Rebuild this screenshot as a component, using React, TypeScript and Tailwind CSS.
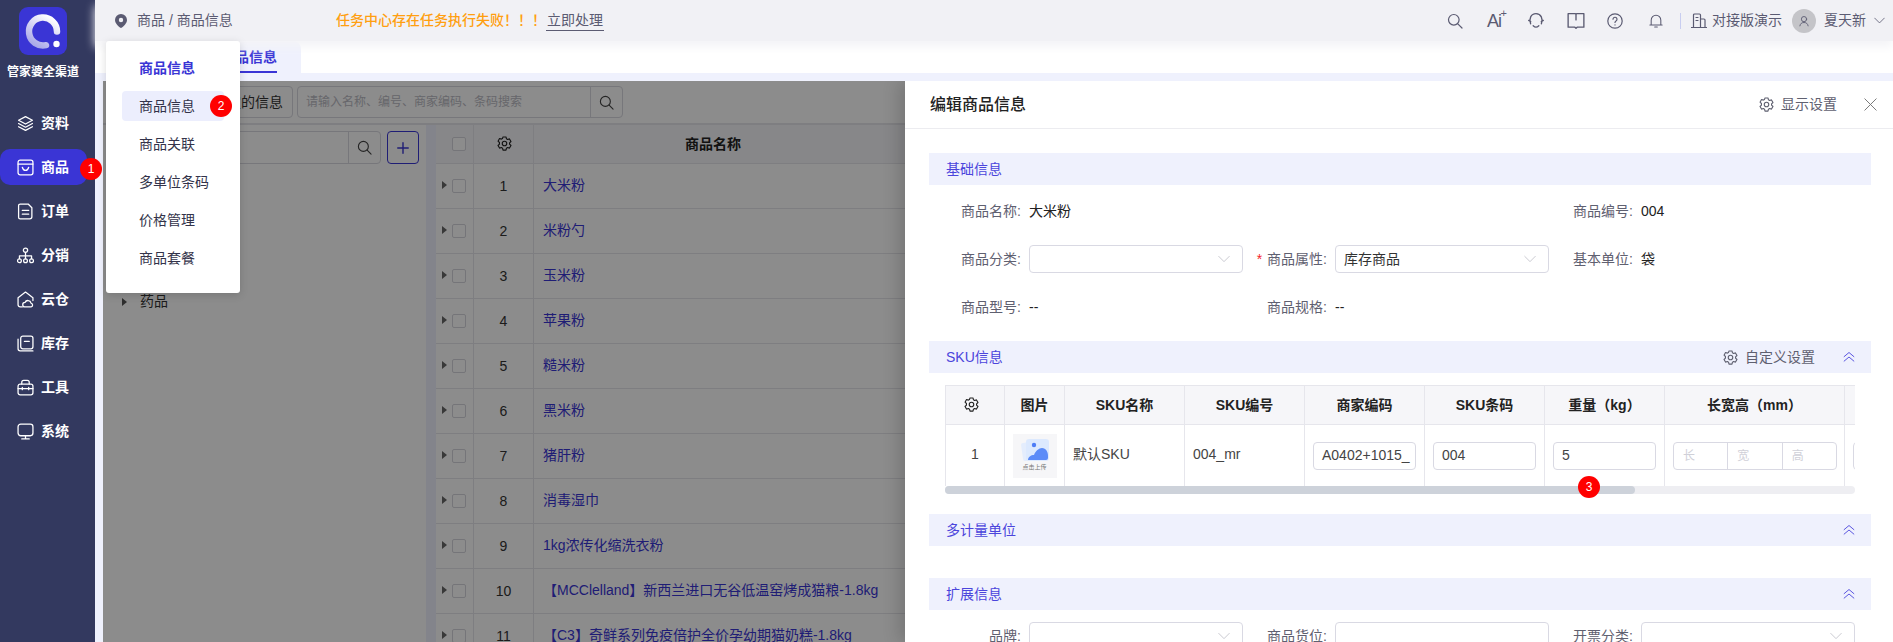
import type { ReactNode } from "react";

const FONT = "font-['Liberation_Sans','Noto_Sans_CJK_SC',sans-serif]";

function Icon({ children, className = "w-4 h-4", box = 16 }: { children: ReactNode; className?: string; box?: number }) {
  return (
    <svg viewBox={`0 0 ${box} ${box}`} fill="none" stroke="currentColor" strokeWidth="1.2" strokeLinecap="round" strokeLinejoin="round" className={className}>
      {children}
    </svg>
  );
}

const GearPath = () => (
  <>
    <path d="M6.400 1h3.200l.5 2 1.200.7 2-.6 1.600 2.800-1.500 1.400v1.400l1.500 1.400-1.600 2.800-2-.6-1.200.7-.5 2H6.400l-.5-2-1.200-.7-2 .6-1.600-2.800 1.500-1.400V6.900L1.100 5.500l1.600-2.800 2 .6 1.200-.7z" />
    <circle cx="8" cy="8" r="2.400" />
  </>
);
const Gear = ({ className = "w-[15px] h-[15px]" }: { className?: string }) => <Icon className={className}><GearPath /></Icon>;

const SearchGlyph = ({ className = "w-[15px] h-[15px]" }: { className?: string }) => (
  <Icon className={className}>
    <circle cx="6.800" cy="6.800" r="5.300" />
    <path d="M10.800 10.800 15 15" />
  </Icon>
);

const navItems: { label: string; active?: boolean; icon: ReactNode }[] = [
  { label: "资料", icon: <><path d="M8 1.500 14.500 5 8 8.500 1.500 5z" /><path d="M1.500 8 8 11.500 14.500 8" /><path d="M1.500 11 8 14.500l6.500-3.500" /></> },
  { label: "商品", active: true, icon: <><rect x="1" y="1" width="14" height="14" rx="2" /><path d="M1 4.800h14" /><path d="M5 7.800c.6 2.200 1.600 3 3 3s2.400-.8 3-3" /></> },
  { label: "订单", icon: <><path d="M3 1h7.500L14 4.500V13a2 2 0 0 1-2 2H3a1.500 1.500 0 0 1-1.500-1.500v-11A1.500 1.500 0 0 1 3 1z" /><path d="M5 7h6M5 10.500h6" /></> },
  { label: "分销", icon: <><circle cx="8" cy="3" r="2" /><circle cx="2.300" cy="13" r="1.800" /><circle cx="8" cy="13" r="1.800" /><circle cx="13.700" cy="13" r="1.800" /><path d="M8 5v6M2.300 11V8.300h11.400V11" /></> },
  { label: "云仓", icon: <><path d="M5 15H3a2 2 0 0 1-2-2V6.300L8 1l7 5.300V9" /><path d="M7.500 15a2.100 2.100 0 0 1 0-4.200 3 3 0 0 1 5.700.5 1.900 1.900 0 0 1 0 3.700z" /></> },
  { label: "库存", icon: <><rect x="3.500" y="1" width="11.500" height="12" rx="2" /><path d="M1 4v9a2 2 0 0 0 2 2h12" /><path d="M7 6h4.500" /></> },
  { label: "工具", icon: <><rect x="1" y="4.800" width="14" height="10.200" rx="2" /><path d="M4.500 4.800V3a1.800 1.800 0 0 1 1.800-1.800h3.400A1.800 1.800 0 0 1 11.500 3v1.800" /><path d="M1 9h14M5 8v2M11 8v2" /></> },
  { label: "系统", icon: <><rect x="1" y="1" width="14" height="11" rx="2.500" /><path d="M8 12v3M4.500 15h7" /></> },
];

function Sidebar() {
  return (
    <aside className="w-[95px] shrink-0 h-full bg-[#33395f] flex flex-col text-white relative">
      <svg viewBox="0 0 48 48" className="w-12 h-12 ml-[19px] mt-[7px]">
        <defs>
          <linearGradient id="ring" x1="0.8" y1="0" x2="0.2" y2="1">
            <stop offset="0" stopColor="#ffffff" />
            <stop offset="1" stopColor="#a9a8e8" />
          </linearGradient>
        </defs>
        <rect width="48" height="48" rx="9" fill="#3a35d5" />
        <path d="M38 24.500A14 14 0 1 0 27 38.200" fill="none" stroke="url(#ring)" strokeWidth="6.500" strokeLinecap="round" />
        <circle cx="37.500" cy="37" r="3.200" fill="#fff" />
      </svg>
      <div className="mt-[9px] pl-[7px] text-[12px] leading-4 font-bold whitespace-nowrap">管家婆全渠道</div>
      <nav className="mt-[21px] flex flex-col">
        {navItems.map((item) => (
          <div key={item.label} className="h-[44px] flex items-center">
            <div className={`h-9 w-[87px] pl-[17px] flex items-center gap-[7px] rounded-[10px] ${item.active ? "bg-[#3a35d5]" : ""}`}>
              <Icon className="w-[17px] h-[17px] shrink-0">{item.icon}</Icon>
              <span className="text-[14px] font-bold leading-5">{item.label}</span>
            </div>
          </div>
        ))}
      </nav>
    </aside>
  );
}

function Header() {
  return (
    <header className="h-[41px] shrink-0 bg-[#f1f1f5] flex items-center text-[#5b5b72] text-[14px] relative z-10 shadow-[0_6px_9px_#f4f4f7]">
      <svg viewBox="0 0 12 14" className="w-3 h-[14px] ml-[20px]">
        <path fillRule="evenodd" d="M6 0a6 6 0 0 1 6 6c0 3.200-3.500 6.800-6 8-2.500-1.200-6-4.800-6-8a6 6 0 0 1 6-6zm0 3.800a2.200 2.200 0 1 0 0 4.400 2.200 2.200 0 0 0 0-4.400z" fill="#5b5b72" />
      </svg>
      <span className="ml-[10px] w-[199px]">商品 / 商品信息</span>
      <span className="text-[#ff9f10] font-medium">任务中心存在任务执行失败！！！</span>
      <span className="border-b border-[#5b5b72] leading-[19px] px-px">立即处理</span>
      <div className="ml-auto flex items-center">
        <SearchGlyph className="w-4 h-4" />
        <div className="ml-[24px] w-[19px] text-[18px] leading-5 relative tracking-[-1px]">Ai<span className="absolute -top-[4px] right-0 text-[11px] leading-3">+</span></div>
        <Icon className="ml-[21px] w-[18px] h-[18px]"><path d="M3.200 10.500C1.500 6 3.500 1.500 8 1.500s6.500 4.500 4.800 9M1.500 7.500l1.800 1M14.500 7.500l-1.800 1M5.500 12.200c1.500 1.500 3.500 1.500 5 0" /></Icon>
        <Icon className="ml-[22px] w-[18px] h-[18px]"><path d="M1 1.500h6.500l.5.500.5-.5H15v12H9l-1 1-1-1H1zM8 2v5" /></Icon>
        <Icon className="ml-[22px] w-4 h-4"><circle cx="8" cy="8" r="7.200" /><path d="M6 6.200a2 2 0 1 1 3 1.800c-.7.400-1 .8-1 1.500M8 11.800v.2" /></Icon>
        <Icon className="ml-[26px] w-[14px] h-4"><path d="M2.500 12V7a5.500 5.500 0 0 1 11 0v5M1 12.500h14M6.500 14.800h3" /></Icon>
        <div className="ml-[17px] w-px h-[16px] bg-[#c8cdf0]" />
        <Icon className="ml-[10px] w-4 h-4"><path d="M2.500 14.500V2a1 1 0 0 1 1-1h5a1 1 0 0 1 1 1v12.500M9.500 6h3.500a1 1 0 0 1 1 1v7.500M.5 14.500h15M5 4.500h2M5 7.500h2" /></Icon>
        <span className="ml-[5px]">对接版演示</span>
        <div className="ml-[10px] w-6 h-6 rounded-full bg-[#c4c4c8] flex items-center justify-center">
          <Icon className="w-3 h-3"><circle cx="8" cy="5.500" r="3.500" /><path d="M2.500 14.500c.5-3 2.500-4.500 5.500-4.500s5 1.500 5.500 4.500" /></Icon>
        </div>
        <span className="ml-2">夏天新</span>
        <Icon className="ml-[8px] mr-[8px] w-[11px] h-[11px]"><path d="M1 4.500 8 11.500l7-7" /></Icon>
      </div>
    </header>
  );
}

const productRows = ["大米粉", "米粉勺", "玉米粉", "苹果粉", "糙米粉", "黑米粉", "猪肝粉", "消毒湿巾", "1kg浓传化缩洗衣粉", "【MCClelland】新西兰进口无谷低温窑烤成猫粮-1.8kg", "【C3】奇鲜系列免疫倍护全价孕幼期猫奶糕-1.8kg"];

const CheckBox = () => <span className="block w-[14px] h-[14px] rounded-[2px] border border-[#d5d5dc] bg-white" />;

function ProductList() {
  return (
    <div className="flex-1 min-w-0 flex flex-col bg-white">
      <div className="h-[44px] shrink-0 border-b-2 border-[#e6e6ec] flex items-center pl-[45px]">
        <div className="h-8 w-[145px] mr-[4px] rounded-[4px] border border-[#d9d9e0] text-[14px] text-[#333] flex items-center justify-end pr-[9px]">选定的信息</div>
        <div className="h-8 w-[326px] rounded-[4px] border border-[#d9d9e0] flex items-center">
          <span className="flex-1 pl-2 text-[12px] text-[#bbbbc4]">请输入名称、编号、商家编码、条码搜索</span>
          <span className="w-8 h-full border-l border-[#d9d9e0] flex items-center justify-center text-[#444]"><SearchGlyph /></span>
        </div>
      </div>
      <div className="flex-1 flex min-h-0">
        <div className="w-[323px] shrink-0 pt-[6px] relative">
          <div className="flex items-start">
            <div className="ml-[10px] w-[268px] h-[33px] rounded-[4px] border border-[#d9d9e0] flex justify-end">
              <span className="w-8 h-full border-l border-[#d9d9e0] flex items-center justify-center text-[#444]"><SearchGlyph /></span>
            </div>
            <div className="ml-[6px] w-8 h-[33px] rounded-[4px] border border-[#3a35d5] text-[#3a35d5] flex items-center justify-center">
              <Icon className="w-[14px] h-[14px]"><path d="M8 2v12M2 8h12" strokeWidth="1.600" /></Icon>
            </div>
          </div>
          <div className="mt-[127px] ml-[19px] flex items-center gap-[13px] text-[14px] text-[#333]">
            <span className="w-0 h-0 border-y-[4px] border-y-transparent border-l-[5px] border-l-[#555]" />
            药品
          </div>
        </div>
        <div className="w-[10px] shrink-0 bg-[#eff1fd]" />
        <div className="flex-1 min-w-0 text-[14px]">
          <div className="h-[39px] flex bg-[#f6f6f9] border-b border-[#e6e6ec]">
            <div className="w-[38px] pl-4 flex items-center border-r border-[#e6e6ec]"><CheckBox /></div>
            <div className="w-[60px] pl-px flex items-center justify-center border-r border-[#e6e6ec] text-[#222] pb-[2px]"><Gear /></div>
            <div className="w-[358px] flex items-center justify-center font-bold text-[#222]">商品名称</div>
          </div>
          {productRows.map((name, i) => (
            <div key={name} className="h-[45px] flex border-b border-[#e6e6ec]">
              <div className="w-[38px] pl-[6px] flex items-center gap-[5px] border-r border-[#e6e6ec]">
                <span className="w-0 h-0 mb-[2px] border-y-[4px] border-y-transparent border-l-[5px] border-l-[#666]" />
                <CheckBox />
              </div>
              <div className="w-[60px] flex items-center justify-center border-r border-[#e6e6ec] text-[#333]">{i + 1}</div>
              <div className="flex-1 pl-[9px] pb-px flex items-center whitespace-nowrap text-[#3a35d5]">{name}</div>
            </div>
          ))}
        </div>
      </div>
    </div>
  );
}

const Chevron = () => (
  <Icon className="w-[12px] h-[12px] text-[#c4c4cc]"><path d="M1 4.500 8 11.500l7-7" /></Icon>
);

function Section({ title, right }: { title: string; right?: ReactNode }) {
  return (
    <div className="h-8 bg-[#eff1fd] pl-[17px] pr-4 flex items-center text-[14px] text-[#4b45dc]">
      <span>{title}</span>
      <div className="ml-auto flex items-center">
        {right}
        {right !== undefined && (
          <Icon className="w-3 h-3 text-[#4b45dc]"><path d="M1.500 7.500 8 2l6.500 5.500M1.500 13.500 8 8l6.500 5.500" /></Icon>
        )}
      </div>
    </div>
  );
}

function Label({ children, required }: { children: string; required?: boolean }) {
  return (
    <div className="pr-2 text-right text-[#5f6070] whitespace-nowrap">
      {required && <span className="text-[#f5222d] mr-[5px]">*</span>}
      {children}:
    </div>
  );
}

function SelectBox({ value, plain }: { value?: string; plain?: boolean }) {
  return (
    <div className="h-7 rounded-[4px] border border-[#d9d9e3] pl-2 pr-[12px] flex items-center text-[#333]">
      <span className="flex-1">{value}</span>
      {!plain && <Chevron />}
    </div>
  );
}

const FIELD_GRID = "grid grid-cols-[100px_214px_92px_214px_92px_214px] items-center text-[14px]";

function TextCell({ value }: { value: string }) {
  return <div className="h-7 rounded-[4px] border border-[#d9d9e3] pl-2 flex items-center overflow-hidden whitespace-nowrap text-[14px] text-[#444]">{value}</div>;
}

const skuHeads: [string, string][] = [
  ["图片", "w-[60px]"],
  ["SKU名称", "w-[120px]"],
  ["SKU编号", "w-[120px]"],
  ["商家编码", "w-[120px]"],
  ["SKU条码", "w-[120px]"],
  ["重量（kg）", "w-[120px]"],
  ["长宽高（mm）", "w-[180px]"],
];

function SkuTable() {
  return (
    <div className="mt-3 ml-4 w-[910px] overflow-hidden">
      <div className="w-[1000px] border-t border-l border-[#e6e6ec]">
        <div className="h-[39px] flex bg-[#f6f6f9] border-b border-[#e6e6ec] text-[14px] font-bold text-[#222]">
          <div className="w-[59px] shrink-0 flex items-center justify-center border-r border-[#e6e6ec] pr-2 pb-[2px]"><Gear /></div>
          {skuHeads.map(([h, w]) => (
            <div key={h} className={`${w} shrink-0 flex items-center justify-center border-r border-[#e6e6ec]`}>{h}</div>
          ))}
        </div>
        <div className="h-[61px] flex text-[14px] text-[#444]">
          <div className="w-[59px] shrink-0 flex items-center justify-center border-r border-[#e6e6ec] pb-[2px]">1</div>
          <div className="w-[60px] shrink-0 flex items-center justify-center border-r border-[#e6e6ec]">
            <div className="w-11 h-11 bg-[#f6f6f8] flex flex-col items-center pt-1">
              <svg viewBox="0 0 28 24" className="w-7 h-6">
                <rect x="1" y="4" width="18" height="18" rx="2" fill="#e4edfd" transform="rotate(-8 10 13)" />
                <rect x="5" y="1" width="23" height="22" rx="3" fill="#dce9fe" />
                <circle cx="13" cy="7" r="2.200" fill="#4d7cf6" />
                <path d="M7 22c0-3 3-5 6-5 1.500-4 5-7 8-7 4 0 6 4 6 8v2a2 2 0 0 1-2 2z" fill="#5b8bf8" />
              </svg>
              <span className="text-[6px] leading-[10px] text-[#777] whitespace-nowrap">点击上传</span>
            </div>
          </div>
          <div className="w-[120px] shrink-0 pl-[8px] pb-[2px] flex items-center border-r border-[#e6e6ec]">默认SKU</div>
          <div className="w-[120px] shrink-0 pl-[8px] pb-[2px] flex items-center border-r border-[#e6e6ec]">004_mr</div>
          <div className="w-[120px] shrink-0 px-2 flex items-center border-r border-[#e6e6ec]"><div className="flex-1"><TextCell value="A0402+1015_" /></div></div>
          <div className="w-[120px] shrink-0 px-2 flex items-center border-r border-[#e6e6ec]"><div className="flex-1"><TextCell value="004" /></div></div>
          <div className="w-[120px] shrink-0 px-2 flex items-center border-r border-[#e6e6ec]"><div className="flex-1"><TextCell value="5" /></div></div>
          <div className="w-[180px] shrink-0 px-2 flex items-center border-r border-[#e6e6ec] text-[#d0d0d8]">
            {["长", "宽", "高"].map((p) => (
              <div key={p} className="flex-1 h-7 pl-[9px] -mr-px first:rounded-l-[4px] last:rounded-r-[4px] border border-[#d9d9e3] flex items-center text-[12px]">{p}</div>
            ))}
          </div>
          <div className="w-[60px] shrink-0 px-2 flex items-center"><div className="flex-1 h-7 rounded-[4px] border border-[#d9d9e3]" /></div>
        </div>
      </div>
      <div className="h-2 rounded-[4px] bg-[#eeeef2]">
        <div className="h-full w-[690px] rounded-[4px] bg-[#cdd2da]" />
      </div>
    </div>
  );
}

function Drawer() {
  return (
    <div className="absolute top-0 bottom-0 right-0 w-[988px] bg-white shadow-[-6px_0_16px_rgba(0,0,0,0.16)] flex flex-col">
      <div className="h-[48px] shrink-0 border-b border-[#ececf0] pl-[25px] flex items-center">
        <span className="text-[16px] font-medium text-[#222]">编辑商品信息</span>
        <div className="ml-auto flex items-center text-[14px] text-[#5f6070]">
          <Gear />
          <span className="ml-[7px]">显示设置</span>
          <Icon className="ml-[27px] mr-4 w-[13px] h-[13px] text-[#777]"><path d="M1 1 15 15M15 1 1 15" /></Icon>
        </div>
      </div>
      <div className="flex-1 min-h-0 overflow-hidden pt-6 pl-6 pr-[22px]">
        <Section title="基础信息" />
        <div className="mt-[2px]">
          <div className={`${FIELD_GRID} h-12`}>
            <Label>商品名称</Label><div className="text-[#222]">大米粉</div>
            <div /><div />
            <Label>商品编号</Label><div className="text-[#222]">004</div>
          </div>
          <div className={`${FIELD_GRID} h-12`}>
            <Label>商品分类</Label><SelectBox />
            <Label required>商品属性</Label><SelectBox value="库存商品" />
            <Label>基本单位</Label><div className="text-[#222]">袋</div>
          </div>
          <div className={`${FIELD_GRID} h-12`}>
            <Label>商品型号</Label><div className="text-[#222]">--</div>
            <Label>商品规格</Label><div className="text-[#222]">--</div>
          </div>
        </div>
        <div className="mt-[10px]">
          <Section
            title="SKU信息"
            right={
              <span className="flex items-center text-[#5f6070] mr-[28px]">
                <Gear />
                <span className="ml-[7px]">自定义设置</span>
              </span>
            }
          />
        </div>
        <SkuTable />
        <div className="mt-5"><Section title="多计量单位" right={<></>} /></div>
        <div className="mt-8"><Section title="扩展信息" right={<></>} /></div>
        <div className={`${FIELD_GRID} mt-3`}>
          <Label>品牌</Label><SelectBox />
          <Label>商品货位</Label><SelectBox plain />
          <Label>开票分类</Label><SelectBox />
        </div>
      </div>
    </div>
  );
}

function NumberBadge({ n, className }: { n: number; className: string }) {
  return <span className={`absolute w-[22px] h-[22px] rounded-full bg-[#ff0000] text-white text-[12px] flex items-center justify-center ${className}`}>{n}</span>;
}

const menuItems = ["商品信息", "商品关联", "多单位条码", "价格管理", "商品套餐"];

function ProductMenu() {
  return (
    <div className="absolute z-20 left-[106px] top-[41px] w-[134px] h-[252px] bg-white rounded-[3px] shadow-[0_2px_8px_rgba(0,0,0,0.15)] pt-[15px] px-4 text-[14px] text-[#33334a]">
      <div className="h-[24px] pl-[17px] font-bold text-[#3a35d5] leading-6">商品信息</div>
      <div className="mt-[11px] flex flex-col">
        {menuItems.map((m, i) => (
          <div key={m} className={`h-[30px] mb-2 pl-[17px] flex items-center rounded-[4px] ${i === 0 ? "bg-[#eceefd]" : ""}`}>{m}</div>
        ))}
      </div>
    </div>
  );
}

export default function App() {
  return (
    <div className={`${FONT} relative h-screen w-full overflow-hidden flex bg-white`}>
      <Sidebar />
      <div className="flex-1 min-w-0 flex flex-col h-full">
        <Header />
        <div className="h-8 shrink-0 bg-white pl-[104px] flex">
          <div className="w-[102px] h-full rounded-t-[8px] bg-[#eff1fd] flex justify-end pr-6">
            <span className="h-full border-b-2 border-[#3a35d5] text-[14px] font-bold text-[#3a35d5] leading-8">商品信息</span>
          </div>
        </div>
        <div className="flex-1 min-h-0 bg-[#eff1fd] pt-2 pl-2 flex">
          <div className="relative flex-1 min-w-0 flex overflow-hidden">
            <ProductList />
            <div className="absolute inset-0 bg-black/45" />
            <Drawer />
          </div>
        </div>
      </div>
      <ProductMenu />
      <NumberBadge n={1} className="z-30 left-[80px] top-[158px]" />
      <NumberBadge n={2} className="z-30 left-[210px] top-[95px]" />
      <NumberBadge n={3} className="z-30 left-[1578px] top-[476px]" />
    </div>
  );
}
